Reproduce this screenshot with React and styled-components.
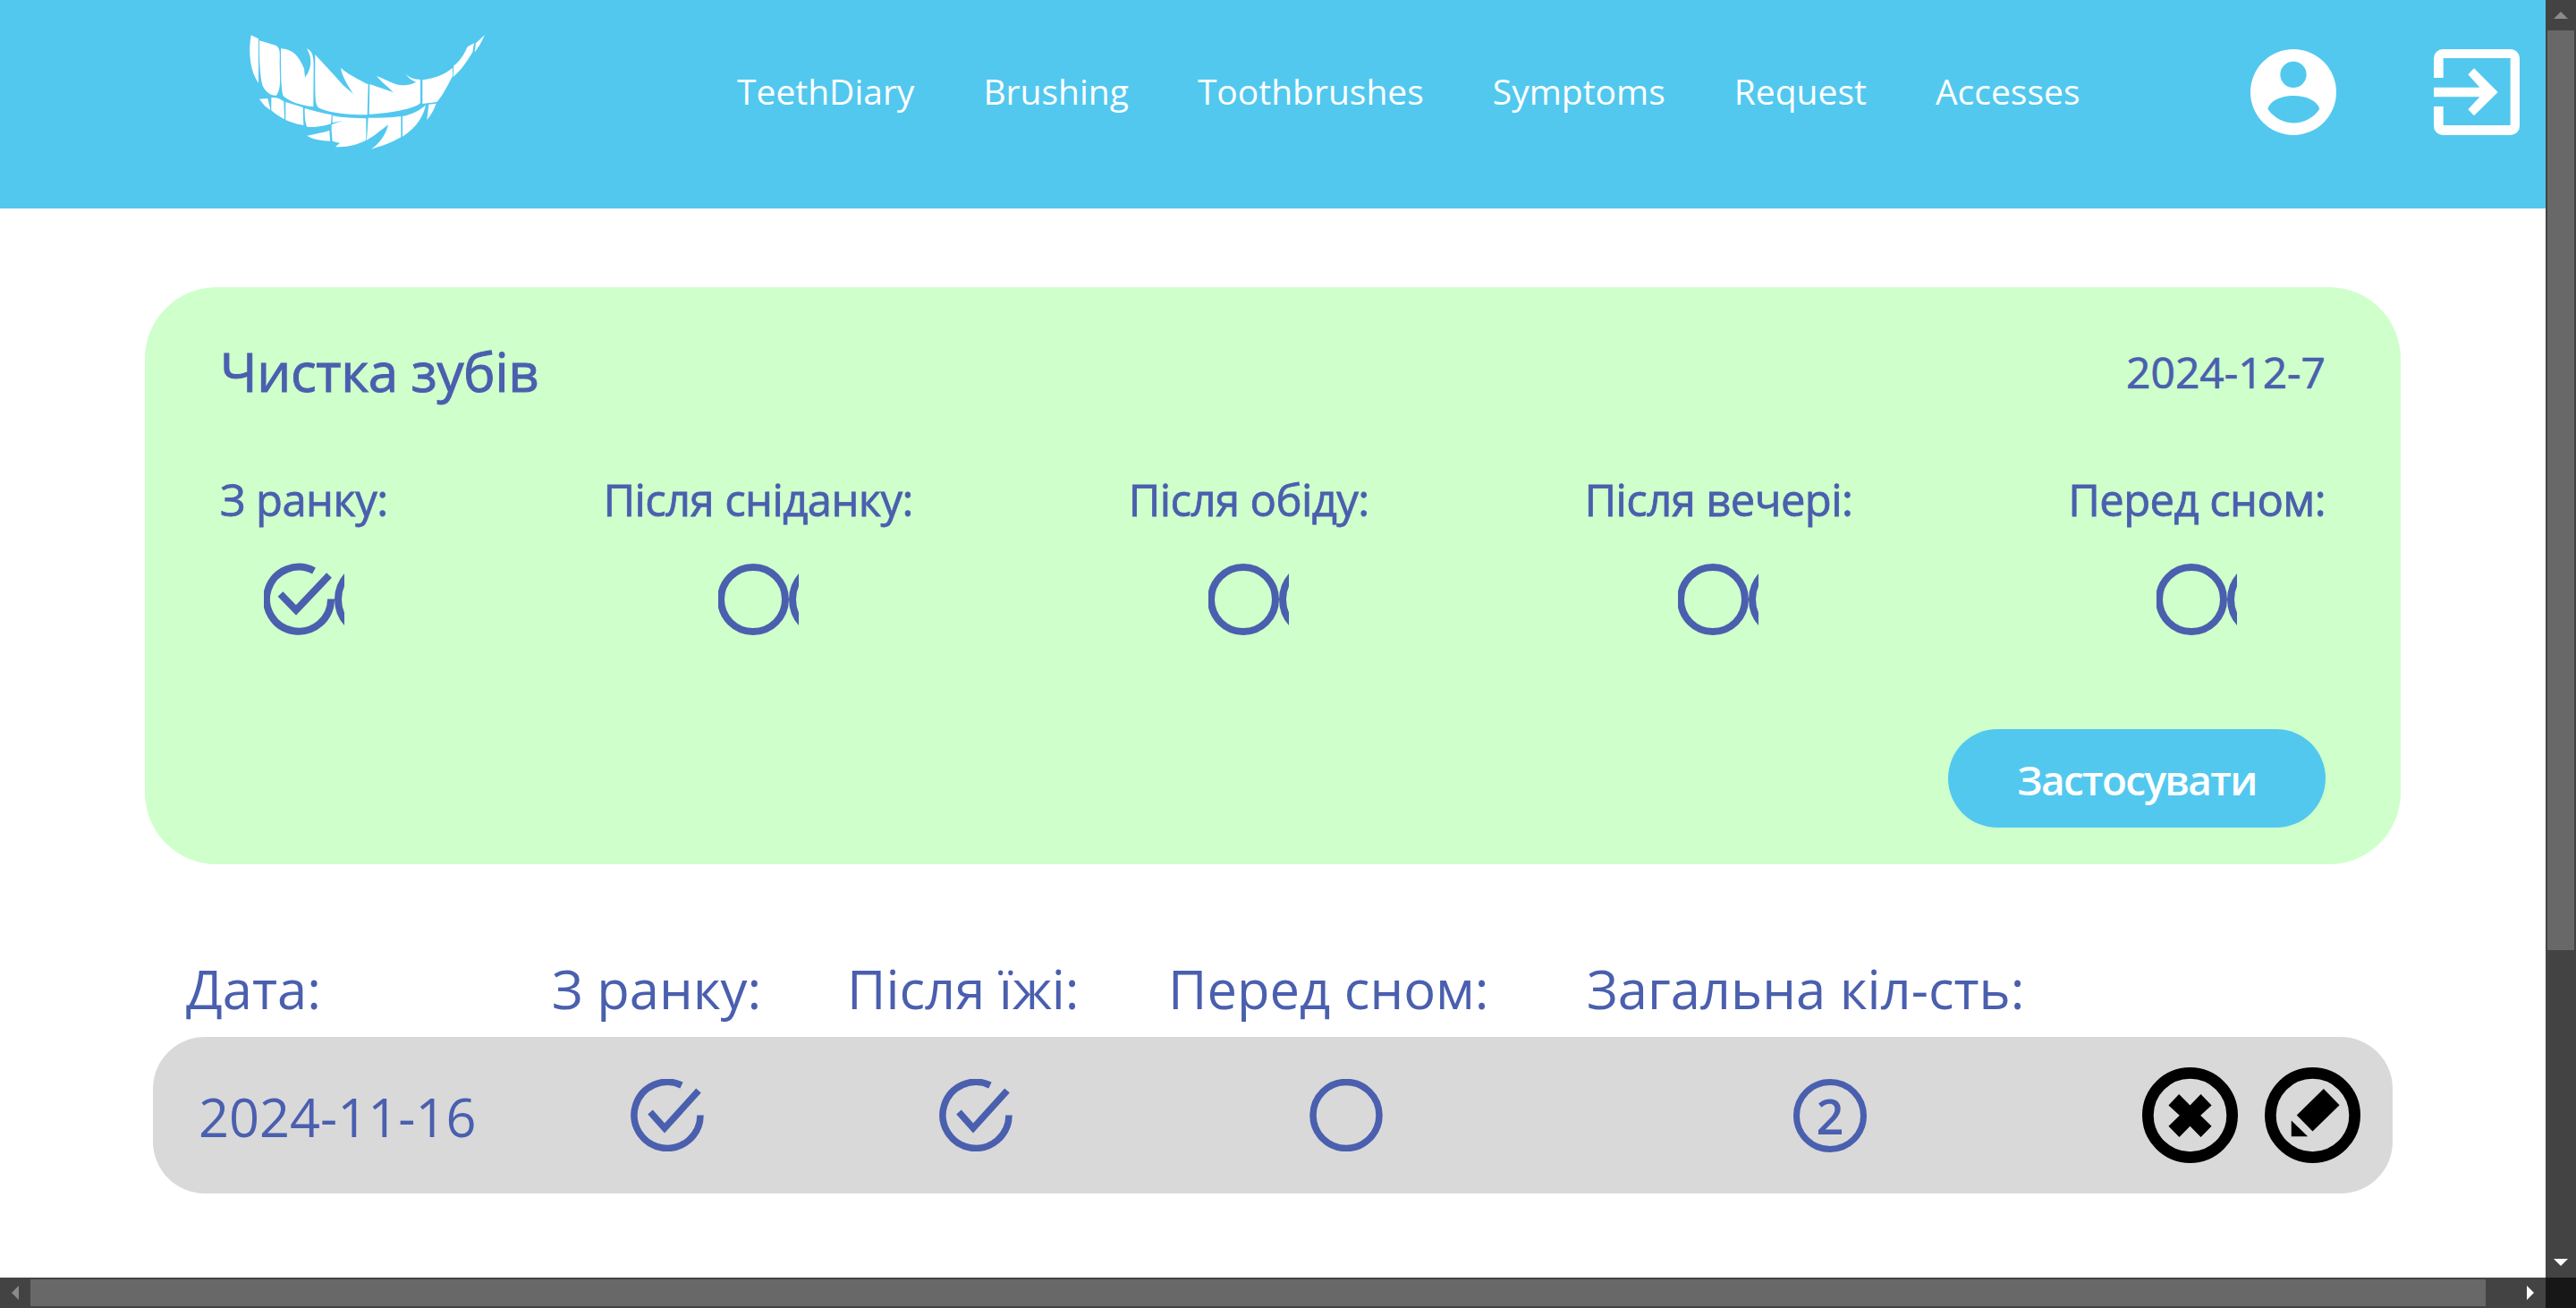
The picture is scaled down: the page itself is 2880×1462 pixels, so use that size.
import React from 'react';
import styled, { createGlobalStyle } from 'styled-components';

const blue = '#52c8ef';
const ink = '#4a5fae';

const GlobalStyle = createGlobalStyle`
  html, body {
    margin: 0;
    padding: 0;
    height: 100%;
    overflow: hidden;
    background: #fff;
    font-family: "Open Sans", "Noto Sans", sans-serif;
  }
  * { box-sizing: border-box; }
`;

const Shell = styled.div`
  display: grid;
  grid-template-columns: 1fr 34px;
  grid-template-rows: 1fr 34px;
  width: 2880px;
  height: 1462px;
`;

const Page = styled.div`
  overflow: hidden;
  background: #fff;
`;

const Header = styled.header`
  display: flex;
  align-items: flex-start;
  height: 233px;
  padding-left: 240px;
  background: ${blue};
`;

const LogoBox = styled.svg`
  width: 340px;
  height: 170px;
  margin-top: 20px;
  flex: none;
  fill: #fff;
`;

const Nav = styled.nav`
  display: flex;
  gap: 77px;
  margin-left: 244px;
  padding-top: 75px;
`;

const NavLink = styled.a`
  color: #fff;
  font-size: 39px;
  line-height: 54px;
  white-space: nowrap;
`;

const HeaderIcons = styled.div`
  display: flex;
  gap: 109px;
  margin-left: auto;
  margin-right: 29px;
  padding-top: 55px;
`;

const HeaderIcon = styled.svg`
  width: 96px;
  height: 96px;
  fill: #fff;
`;

const Panel = styled.section`
  display: flex;
  flex-direction: column;
  height: 645px;
  margin: 88px 162px 0;
  padding: 60px 84px 0;
  background: #cfffcb;
  border-radius: 80px;
  color: ${ink};
`;

const PanelTop = styled.div`
  display: flex;
  justify-content: space-between;
  align-items: center;
  height: 68px;
`;

const PanelTitle = styled.h2`
  margin: 0;
  font-size: 60px;
  font-weight: 500;
  line-height: 68px;
  letter-spacing: -0.4px;
  -webkit-text-stroke: 1px ${ink};
`;

const PanelDate = styled.div`
  font-size: 48px;
  font-weight: 500;
  -webkit-text-stroke: 0.7px ${ink};
`;

const Meals = styled.div`
  display: flex;
  justify-content: space-between;
  margin-top: 78px;
`;

const Meal = styled.div`
  display: flex;
  flex-direction: column;
  align-items: center;
`;

const MealLabel = styled.div`
  font-size: 49px;
  font-weight: 500;
  line-height: 62px;
  letter-spacing: -0.6px;
  white-space: nowrap;
  -webkit-text-stroke: 0.8px ${ink};
`;

const MealMark = styled.svg`
  display: block;
  width: 90px;
  height: 83px;
  margin-top: 40px;
  fill: none;
  stroke: ${ink};
  stroke-width: 8;
`;

const PanelFooter = styled.div`
  display: flex;
  justify-content: flex-end;
  margin-top: 103px;
`;

const ApplyButton = styled.button`
  width: 422px;
  height: 110px;
  padding-top: 2px;
  border: 0;
  border-radius: 55px;
  background: ${blue};
  color: #fff;
  font-family: inherit;
  font-size: 46px;
  font-weight: 600;
  letter-spacing: -1.7px;
`;

const TableHead = styled.div`
  display: grid;
  grid-template-columns: 409px 330px 359px 468px auto;
  margin: 97px 171px 0;
  padding-left: 37px;
  height: 84px;
  align-items: center;
  color: ${ink};
  font-size: 59.7px;
  line-height: 84px;
  white-space: nowrap;
`;

const TableRow = styled.div`
  display: grid;
  grid-template-columns: 483px 345px 414px 542px 1fr auto;
  align-items: center;
  height: 175px;
  margin: 12px 171px 0;
  padding: 0 36px 0 51px;
  background: #d9d9d9;
  border-radius: 58px;
  color: ${ink};
`;

const RowDate = styled.div`
  margin-top: 2px;
  font-size: 59.5px;
  font-weight: 400;
  white-space: nowrap;
`;

const RowMark = styled.svg`
  display: block;
  width: 82px;
  height: 81px;
  fill: none;
  stroke: ${ink};
  stroke-width: 7.5;
`;

const CountBadge = styled.div`
  display: flex;
  align-items: center;
  justify-content: center;
  width: 82px;
  height: 82px;
  margin-left: -1px;
  border: 7px solid ${ink};
  border-radius: 50%;
  font-size: 54px;
  font-weight: 600;
  line-height: 1;
`;

const RowActions = styled.div`
  display: flex;
  gap: 30px;
`;

const ActionButton = styled.svg`
  display: block;
  width: 107px;
  height: 107px;
`;

const VBar = styled.div`
  display: flex;
  flex-direction: column;
  background: #434343;
`;

const HBar = styled.div`
  display: flex;
  background: #434343;
`;

const Corner = styled.div`
  background: #171717;
`;

const ArrowCell = styled.div`
  display: flex;
  align-items: center;
  justify-content: center;
  flex: none;
  width: 34px;
  height: 34px;
  ${p => p.$end && (p.$row ? 'margin-left: auto;' : 'margin-top: auto;')}
`;

const ArrowUp = styled.div`
  width: 0;
  height: 0;
  border: 8px solid transparent;
  border-top: 0;
  border-bottom: 8px solid ${p => p.$color};
`;

const ArrowDown = styled.div`
  width: 0;
  height: 0;
  border: 8px solid transparent;
  border-bottom: 0;
  border-top: 8px solid ${p => p.$color};
`;

const ArrowLeft = styled.div`
  width: 0;
  height: 0;
  border: 8px solid transparent;
  border-left: 0;
  border-right: 8px solid ${p => p.$color};
`;

const ArrowRight = styled.div`
  width: 0;
  height: 0;
  border: 8px solid transparent;
  border-right: 0;
  border-left: 8px solid ${p => p.$color};
`;

const VThumb = styled.div`
  width: 30px;
  height: 1028px;
  margin: 0 2px;
  background: #686868;
`;

const HThumb = styled.div`
  width: 2745px;
  height: 30px;
  margin: 2px 0;
  background: #686868;
`;

const logoPaths = [
  'M122 58L147 70L147 218C125 190 110 130 122 58Z',
  'M150 76L205 92C218 100 220 110 218 150C218 200 225 235 207 260C190 262 170 250 160 225C150 190 150 120 150 76Z',
  'M222 103C262 105 280 125 300 170L303 200C322 175 332 140 308 102C330 112 332 130 332 170L331 298C290 295 250 280 230 262C222 240 222 170 222 103Z',
  'M337 123C375 165 405 195 430 225L465 255C445 225 425 190 423 167C440 185 480 205 515 223L512 325C450 325 390 320 350 302C335 290 337 270 337 123Z',
  'M520 222L600 250C585 235 560 215 543 195C570 203 590 220 620 225C640 228 665 222 675 215C660 210 648 200 640 187C650 200 670 207 690 207L690 285C680 300 600 320 518 323Z',
  'M697 208C740 203 770 190 798 168L798 195C780 230 765 260 745 282L697 288Z',
  'M802 160C825 145 840 115 848 97L870 85L865 115C850 140 825 180 800 197Z',
  'M876 85L906 57C895 80 885 100 872 115Z',
  'M150 272L178 270L187 308C170 300 160 285 150 272Z',
  'M190 268C205 265 220 272 232 280L234 340C215 330 200 320 190 310Z',
  'M238 282L296 300L298 360C270 355 250 348 238 342Z',
  'M302 303C330 310 360 320 392 325L390 355C360 365 330 368 310 365C302 350 302 325 302 303Z',
  'M395 328C430 335 470 337 508 337L508 410C480 425 440 435 405 432L420 420L395 413L392 378L392 358L428 345L395 352Z',
  'M385 378L387 413C360 412 330 408 310 395C335 390 360 385 385 378Z',
  'M515 335C550 335 590 335 625 330L625 400C590 420 560 430 525 440C555 420 575 390 582 358C560 375 530 400 510 410Z',
  'M630 330C660 325 690 310 708 292C700 330 680 365 630 398Z',
  'M718 290L743 287C735 310 725 325 712 342Z',
];

const Logo = () => (
  <LogoBox viewBox="0 0 1020 510">
    {logoPaths.map(d => <path key={d} d={d} />)}
  </LogoBox>
);

const UserIcon = () => (
  <HeaderIcon viewBox="0 0 288 288">
    <path
      fillRule="evenodd"
      d="M144 0A144 144 0 1 1 144 288A144 144 0 1 1 144 0ZM144 41A44 44 0 1 0 144 129A44 44 0 1 0 144 41ZM58 200C75 141 215 141 232 200C190 263 100 263 58 200Z"
    />
  </HeaderIcon>
);

const ExitIcon = () => (
  <HeaderIcon viewBox="0 0 288 288">
    <path d="M0 96V30A30 30 0 0 1 30 0H258A30 30 0 0 1 288 30V258A30 30 0 0 1 258 288H30A30 30 0 0 1 0 258V192H32V255H257V30H32V96Z" />
    <path d="M0 128H154L115 85L135 64L215 144L135 223L115 202L154 160H0Z" />
  </HeaderIcon>
);

const MealCheck = () => (
  <MealMark viewBox="0 0 90 83">
    <path d="M75 40.5A36 36 0 1 1 56 9" />
    <path d="M18.5 35L36 53L73 14" />
    <circle cx="123" cy="41" r="40" />
  </MealMark>
);

const MealEmpty = () => (
  <MealMark viewBox="0 0 90 83">
    <circle cx="39" cy="41" r="36" />
    <circle cx="123" cy="41" r="40" />
  </MealMark>
);

const DoneMark = () => (
  <RowMark viewBox="0 0 82 81">
    <path d="M78 40.5A37 37 0 1 1 57 7" />
    <path d="M22 37L38 55L76 13" />
  </RowMark>
);

const EmptyMark = () => (
  <RowMark viewBox="0 0 82 81">
    <circle cx="41" cy="40.5" r="37" />
  </RowMark>
);

const DeleteAction = () => (
  <ActionButton viewBox="0 0 320 320">
    <circle cx="160" cy="160" r="141" fill="none" stroke="#000" strokeWidth="38" />
    <path d="M88 127L123 90L160 127L196 90L232 127L195 161L232 197L196 233L160 197L124 233L88 197L125 161Z" />
  </ActionButton>
);

const EditAction = () => (
  <ActionButton viewBox="0 0 320 320">
    <circle cx="160" cy="160" r="141" fill="none" stroke="#000" strokeWidth="38" />
    <path d="M197 72L250 126L160 214L107 160Z" />
    <path d="M89 178L144 231H89Z" />
  </ActionButton>
);

const navItems = ['TeethDiary', 'Brushing', 'Toothbrushes', 'Symptoms', 'Request', 'Accesses'];

const meals = [
  { label: 'З ранку:', done: true },
  { label: 'Після сніданку:', done: false },
  { label: 'Після обіду:', done: false },
  { label: 'Після вечері:', done: false },
  { label: 'Перед сном:', done: false },
];

const columns = ['Дата:', 'З ранку:', 'Після їжі:', 'Перед сном:', 'Загальна кіл-сть:'];

export default function App() {
  return (
    <Shell>
      <GlobalStyle />
      <Page>
        <Header>
          <Logo />
          <Nav>
            {navItems.map(item => <NavLink key={item}>{item}</NavLink>)}
          </Nav>
          <HeaderIcons>
            <UserIcon />
            <ExitIcon />
          </HeaderIcons>
        </Header>

        <Panel>
          <PanelTop>
            <PanelTitle>Чистка зубів</PanelTitle>
            <PanelDate>2024-12-7</PanelDate>
          </PanelTop>
          <Meals>
            {meals.map(meal => (
              <Meal key={meal.label}>
                <MealLabel>{meal.label}</MealLabel>
                {meal.done ? <MealCheck /> : <MealEmpty />}
              </Meal>
            ))}
          </Meals>
          <PanelFooter>
            <ApplyButton>Застосувати</ApplyButton>
          </PanelFooter>
        </Panel>

        <TableHead>
          {columns.map(col => <div key={col}>{col}</div>)}
        </TableHead>
        <TableRow>
          <RowDate>2024-11-16</RowDate>
          <DoneMark />
          <DoneMark />
          <EmptyMark />
          <CountBadge>2</CountBadge>
          <RowActions>
            <DeleteAction />
            <EditAction />
          </RowActions>
        </TableRow>
      </Page>

      <VBar>
        <ArrowCell><ArrowUp $color="#8a8a8a" /></ArrowCell>
        <VThumb />
        <ArrowCell $end><ArrowDown $color="#fff" /></ArrowCell>
      </VBar>
      <HBar>
        <ArrowCell><ArrowLeft $color="#8a8a8a" /></ArrowCell>
        <HThumb />
        <ArrowCell $end $row><ArrowRight $color="#fff" /></ArrowCell>
      </HBar>
      <Corner />
    </Shell>
  );
}
